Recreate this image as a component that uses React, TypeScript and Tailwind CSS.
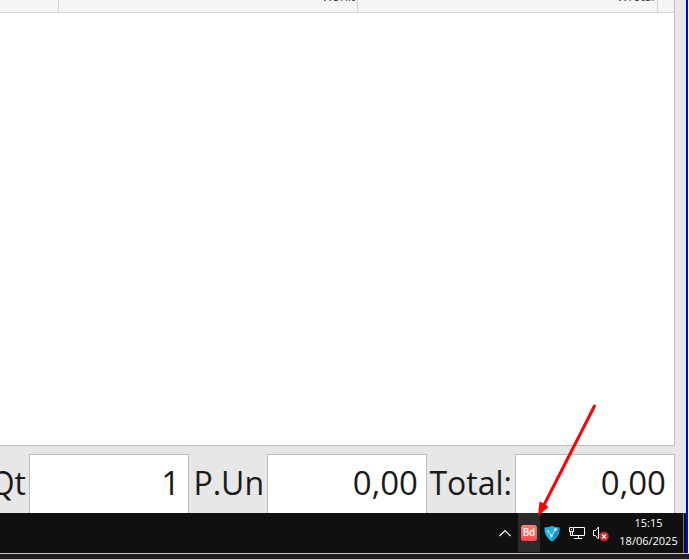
import type { ReactNode } from 'react';

const fields = [
  { id: 'qt', label: 'Qt', value: '1', groupClass: 'flex-[189]', labelClass: 'w-[29px]' },
  { id: 'unit-price', label: 'P.Un', value: '0,00', groupClass: 'flex-[238]', labelClass: 'w-[78px]' },
  { id: 'total', label: 'Total:', value: '0,00', groupClass: 'flex-[248]', labelClass: 'w-[88px]' },
];

function ItemsTable() {
  return (
    <div className="grow border-r border-b border-[#bdbdbd] bg-white">
      <table className="w-full table-fixed border-collapse bg-[#f5f5f5] text-xs text-[#333]">
        <thead>
          <tr className="border-b border-[#d6d6d6]">
            <th aria-label="Item" className="w-[58px] border-r border-[#d6d6d6] p-0" />
            <HeaderCell>V.Unit</HeaderCell>
            <HeaderCell>V.Total</HeaderCell>
            <th aria-label="Scroll" className="w-[17px] p-0" />
          </tr>
        </thead>
      </table>
    </div>
  );
}

function HeaderCell({ children }: { children: ReactNode }) {
  return (
    <th className="border-r border-[#d6d6d6] p-0 font-normal">
      {/* scrolled up, only the foot of the title stays in view */}
      <div className="flex h-3 items-end justify-end pr-[2px] pb-[9px] leading-3">{children}</div>
    </th>
  );
}

function TotalsBar() {
  return (
    <form className="mt-2 flex h-[59px] text-[#1a1a1a]">
      {fields.map((field) => (
        <div key={field.id} className={`flex min-w-0 ${field.groupClass}`}>
          <label
            htmlFor={field.id}
            className={`flex shrink-0 items-center justify-end pr-[3px] pb-[2px] text-[32px] whitespace-nowrap ${field.labelClass}`}
          >
            {field.label}
          </label>
          <input
            id={field.id}
            defaultValue={field.value}
            className="w-40 min-w-0 grow border border-b-0 border-[#bdbdbd] bg-white pr-2 pb-[2px] text-right text-[33px] outline-none"
          />
        </div>
      ))}
    </form>
  );
}

function Arrow() {
  return (
    <svg
      className="pointer-events-none absolute bottom-9 left-5 z-10"
      width="60"
      height="114"
      viewBox="0 0 60 114"
      fill="none"
    >
      <path d="M56.5 4L6 103" stroke="#f00" strokeWidth="3" strokeLinecap="round" />
      <path d="M0 114L1.5 99.5L6 101.5L10.5 105Z" fill="#f00" />
    </svg>
  );
}

function ShieldIcon() {
  return (
    <svg width="16" height="17" viewBox="0 0 16 17" fill="none">
      <path d="M8 0.5C10 2 12.5 2.4 15.5 2.5C15.7 8.5 13.5 13 8 16.5C2.5 13 0.3 8.5 0.5 2.5C3.5 2.4 6 2 8 0.5Z" fill="#22b0de" />
      <path d="M8 16.5C13.5 13 15.7 8.5 15.5 2.5L8 10Z" fill="#1793c4" />
      <path d="M4 6.5L7.5 11L11.5 4.5" stroke="#8cdcf2" strokeWidth="1.2" />
      <circle cx="4" cy="6.5" r="1.2" fill="#8ce1f7" />
      <circle cx="7.5" cy="11" r="1.4" fill="#c4effb" />
      <circle cx="11.5" cy="4.5" r="1.5" fill="#c4effb" />
    </svg>
  );
}

function NetworkIcon() {
  return (
    <svg width="16" height="14" viewBox="0 0 16 14" fill="none" stroke="#fff">
      <path d="M5 1.5H15.5V9.5H3.5V5.5M9.5 9.5V12.5M5 12.5H13" />
      <path d="M0.5 1.5H4.5V5.5H0.5ZM2.5 3V4M1.5 5.5V9.5H3.5" />
    </svg>
  );
}

function VolumeIcon() {
  return (
    <svg width="18" height="16" viewBox="0 0 18 16" fill="none">
      <path d="M2.5 4.5H4.5L7.5 1V13L4.5 9.5H2.5Z" stroke="#fff" />
      <circle cx="13" cy="10.5" r="4.8" fill="#d3212d" />
      <path d="M11 8.5L15 12.5M15 8.5L11 12.5" stroke="#fff" strokeWidth="1.4" />
    </svg>
  );
}

function Taskbar() {
  return (
    <footer className="flex h-10 justify-end bg-[#101010] text-white">
      <button type="button" aria-label="Show hidden icons" className="flex w-6 items-center justify-center">
        <svg width="12" height="8" viewBox="0 0 12 8" fill="none" stroke="#fff" strokeWidth="1.2">
          <path d="M0.5 7L6 1.5L11.5 7" />
        </svg>
      </button>
      <button type="button" className="relative ml-[1px] flex h-[39px] w-[22px] items-center justify-center bg-[#2b2b2b]">
        <span className="flex size-4 items-center justify-center rounded-[3px] bg-linear-to-b from-[#ff7f6e] to-[#fb4350] font-['Roboto'] text-[10px] font-medium">
          Bd
        </span>
        <Arrow />
      </button>
      <button type="button" aria-label="Protection" className="flex w-6 items-center justify-center">
        <ShieldIcon />
      </button>
      <button type="button" aria-label="Network" className="flex w-6 items-center justify-center pl-[2px]">
        <NetworkIcon />
      </button>
      <button type="button" aria-label="Volume muted" className="flex w-6 items-center justify-center pt-[2px]">
        <VolumeIcon />
      </button>
      <button type="button" className="ml-[2px] flex w-[69px] flex-col items-center justify-center pb-[2px] text-[11px] leading-[18px]">
        <span>15:15</span>
        <span>18/06/2025</span>
      </button>
      <button type="button" aria-label="Show desktop" className="w-[3px] border-l border-[#6b6b6b]" />
    </footer>
  );
}

export default function App() {
  return (
    <div className="flex min-h-screen flex-col overflow-x-hidden bg-[#211d1f] font-['Open_Sans','Noto_Sans',sans-serif]">
      <div className="flex grow flex-col border-r border-white">
        <div className="flex grow flex-col border-r-2 border-[#0000ff]">
          <main className="flex grow flex-col bg-[#e7e7e7] pr-[11px]">
            <ItemsTable />
            <TotalsBar />
          </main>
          <Taskbar />
        </div>
      </div>
      <div className="h-[6px] border-t border-[#c8c8c8]" />
    </div>
  );
}
